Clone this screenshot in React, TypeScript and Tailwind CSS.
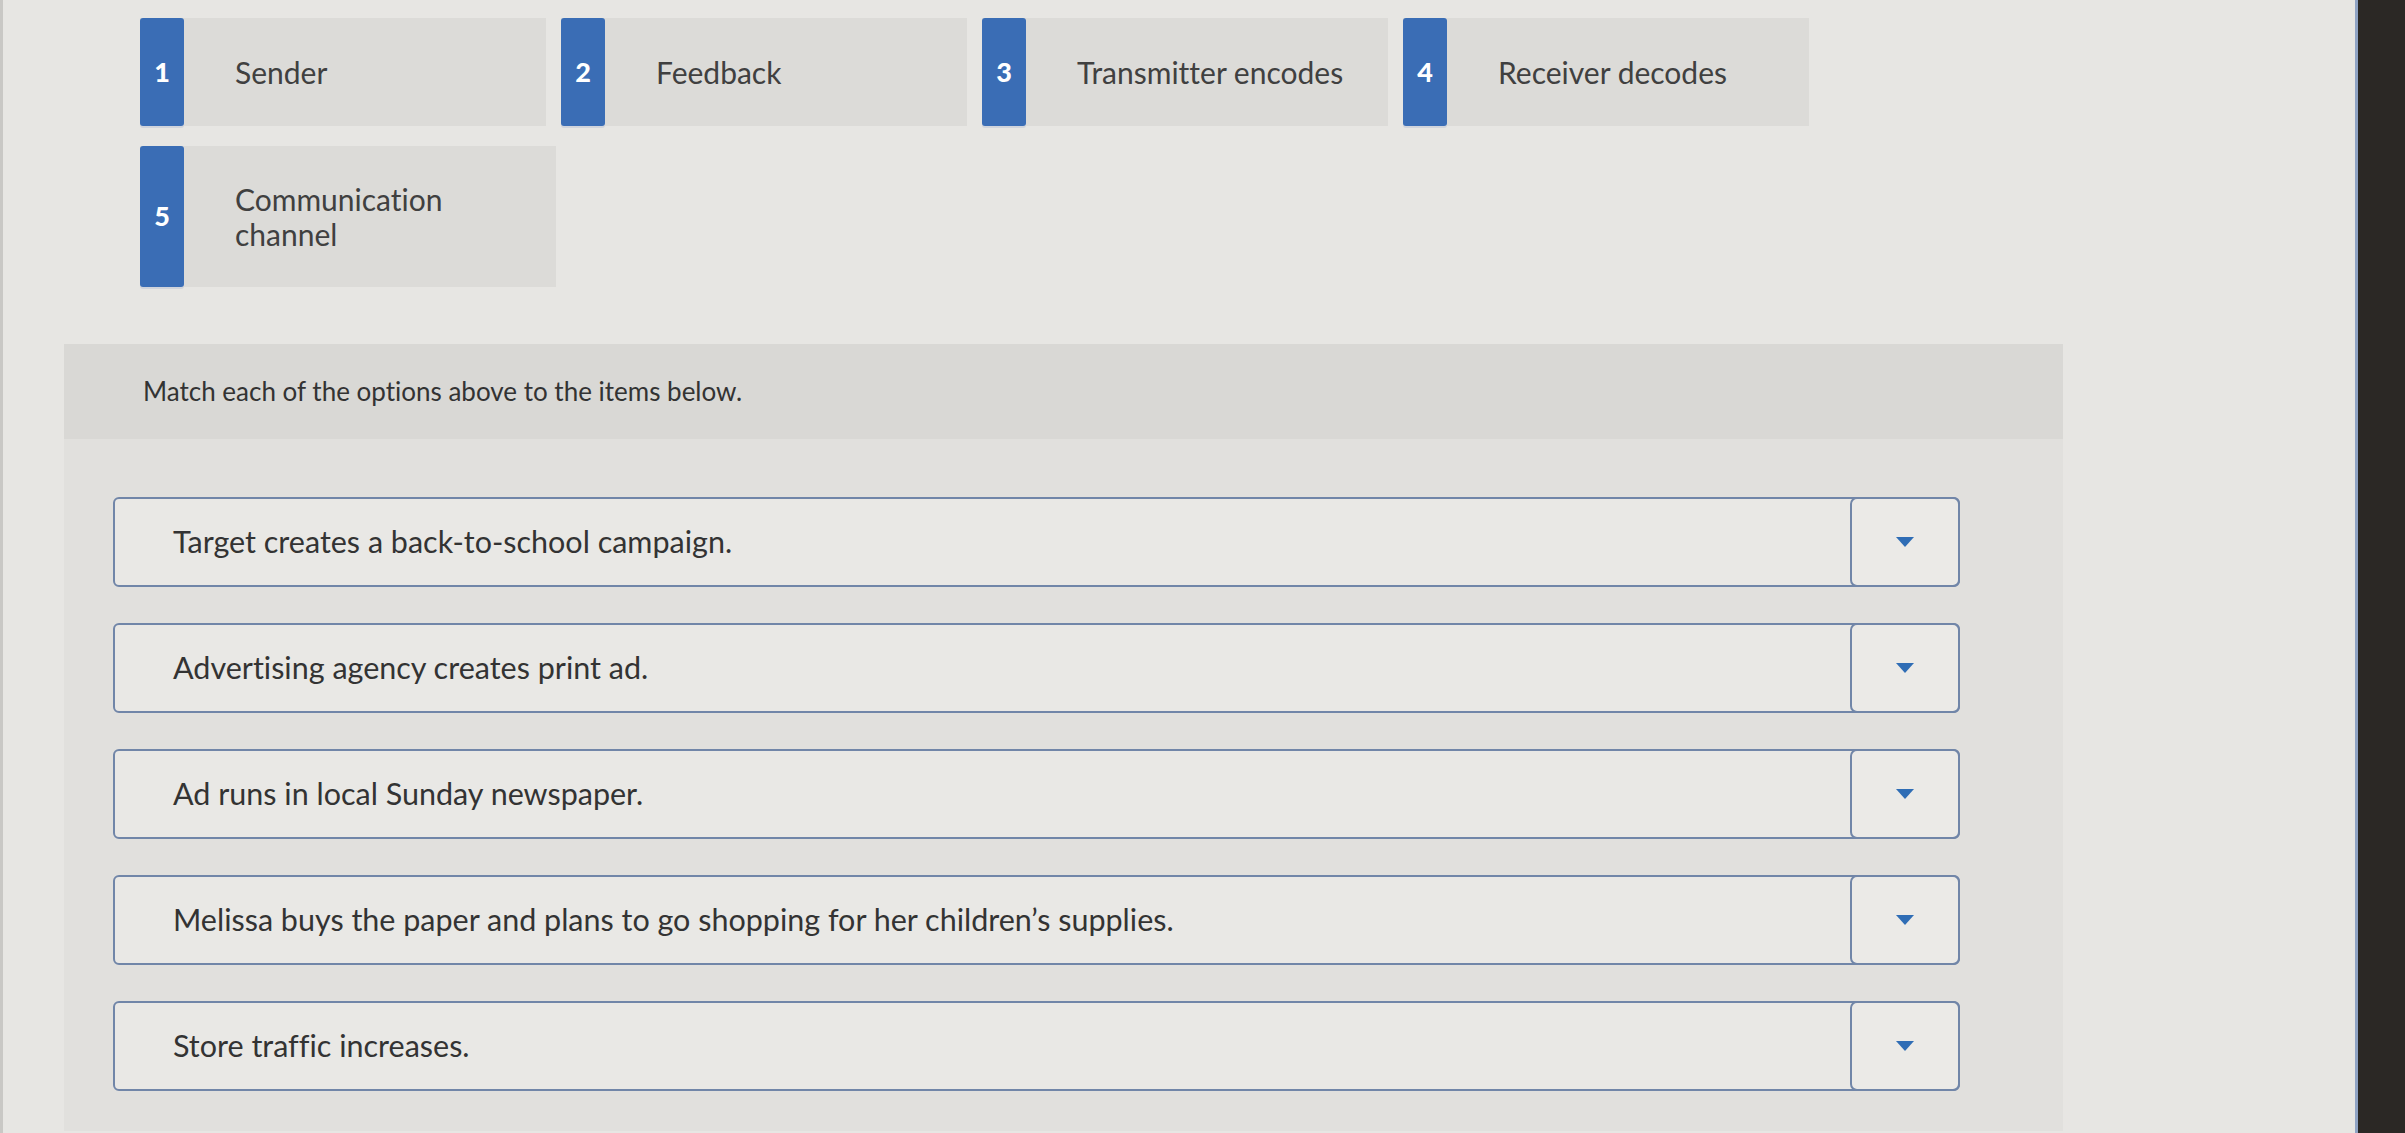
const OPTIONS = [
  { n: 1, label: "Sender" },
  { n: 2, label: "Feedback" },
  { n: 3, label: "Transmitter encodes" },
  { n: 4, label: "Receiver decodes" },
  { n: 5, label: "Communication channel", narrow: true },
];

const ITEMS = [
  "Target creates a back-to-school campaign.",
  "Advertising agency creates print ad.",
  "Ad runs in local Sunday newspaper.",
  "Melissa buys the paper and plans to go shopping for her children\u2019s supplies.",
  "Store traffic increases.",
];

function OptionTile({ n, label, narrow }: { n: number; label: string; narrow?: boolean }) {
  return (
    <div className={`flex bg-[#dcdbd8] ${narrow ? "h-[141px] w-[416px]" : "h-[108px] w-[406px]"}`}>
      <div className="w-[44px] shrink-0 rounded-[3px] bg-[#3a6db5] flex items-center justify-center text-white font-black text-[27px] shadow-[0_2px_0_#d0d4dc]">
        {n}
      </div>
      <div className={`pl-[51px] flex items-center text-[30px] leading-[35px] text-[#404040] ${narrow ? "w-[270px]" : ""}`}>
        {label}
      </div>
    </div>
  );
}

function MatchRow({ text }: { text: string }) {
  return (
    <div className="flex h-[90px] w-[1847px] rounded-[6px] border-2 border-[#7186a8] bg-[#e9e8e5]">
      <div className="flex-1 flex items-center pl-[58px] text-[30.5px] text-[#333333]">{text}</div>
      <div className="w-[110px] -my-[2px] -mr-[2px] rounded-[7px] border-2 border-[#7186a8] bg-[#ebeae7] flex items-center justify-center">
        <svg width="20" height="12" viewBox="0 0 20 12">
          <polygon points="1,1 19,1 10,11" fill="#2f6db5" />
        </svg>
      </div>
    </div>
  );
}

export default function App() {
  return (
    <div className="flex h-[1133px] w-[2405px] overflow-hidden bg-[#e7e6e3] font-['Lato','Liberation_Sans',sans-serif] [font-variant-ligatures:none]">
      <div className="flex-1 border-l-[3px] border-[#c9c8c5]">
        <div className="pl-[137px] pt-[18px] flex flex-wrap gap-x-[15px] gap-y-[20px] w-[1820px]">
          {OPTIONS.map((o) => (
            <OptionTile key={o.n} n={o.n} label={o.label} narrow={o.narrow} />
          ))}
        </div>

        <div className="ml-[61px] mt-[57px] w-[1999px] bg-[#e1e0dd] pb-[40px]">
          <div className="h-[95px] bg-[#d9d8d5] flex items-center pl-[79px] text-[26px] text-[#333333]">
            Match each of the options above to the items below.
          </div>
          <div className="pt-[58px] pl-[49px] flex flex-col gap-[36px]">
            {ITEMS.map((t) => (
              <MatchRow key={t} text={t} />
            ))}
          </div>
        </div>
      </div>
      <div className="w-[50px] border-l-[3px] border-[#8fa3c4] bg-[#2b2825]" />
    </div>
  );
}
